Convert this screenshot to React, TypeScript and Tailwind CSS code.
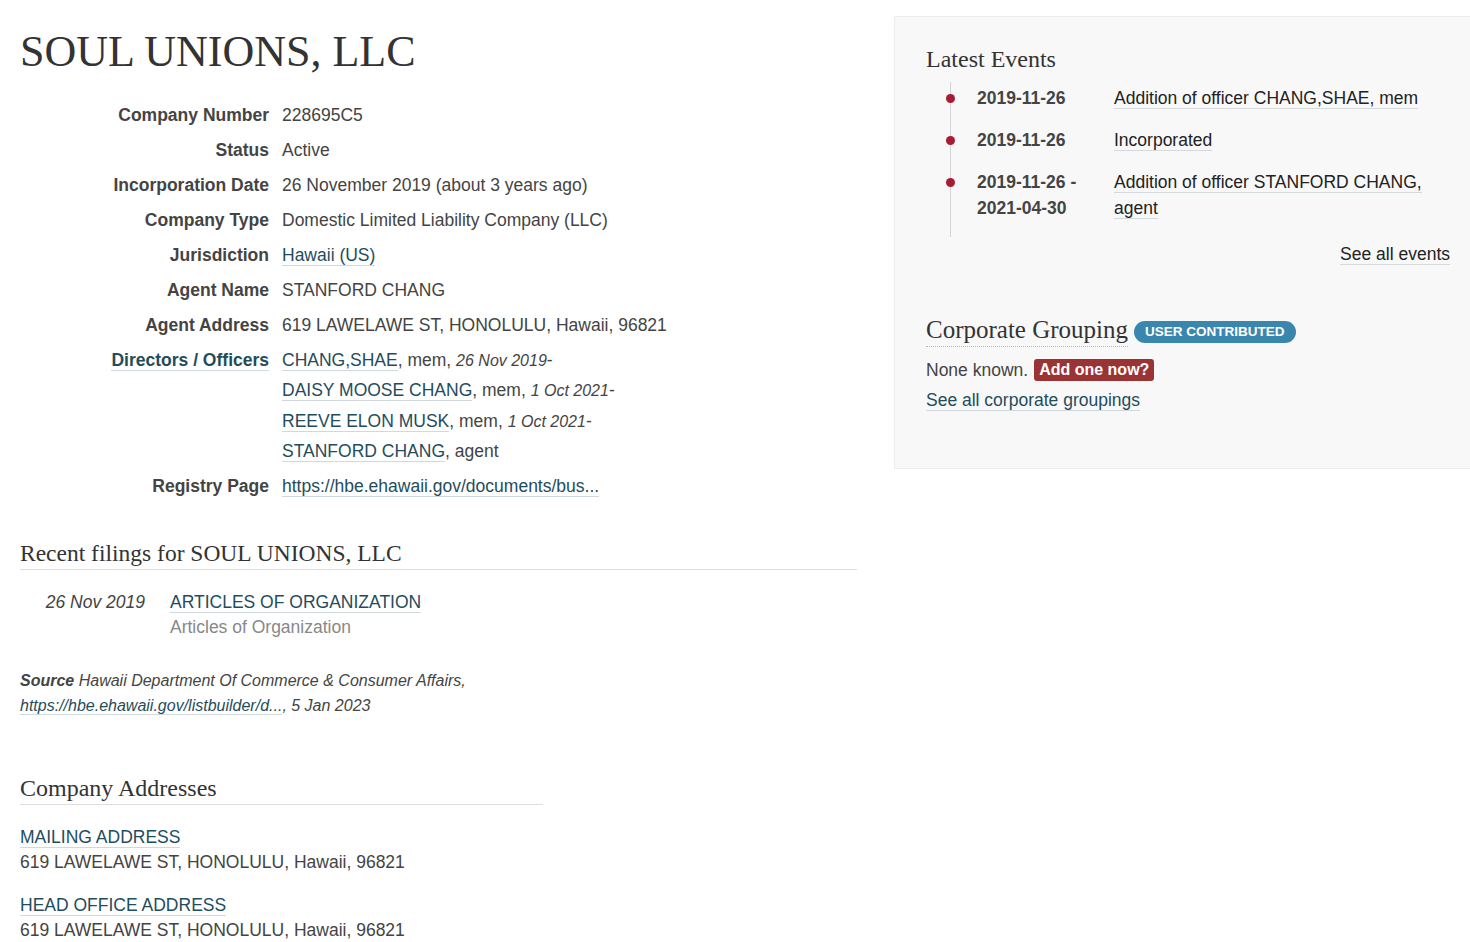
import React from 'react';

const sans = "font-['Liberation_Sans',Arial,sans-serif]";
const serif = "font-['Liberation_Serif','Times_New_Roman',serif]";
const link = 'text-[#1f4d5c] border-b border-[#cfd9de]';

const details: { label: string; value: React.ReactNode }[] = [
  { label: 'Company Number', value: '228695C5' },
  { label: 'Status', value: 'Active' },
  { label: 'Incorporation Date', value: '26 November 2019 (about 3 years ago)' },
  { label: 'Company Type', value: 'Domestic Limited Liability Company (LLC)' },
  { label: 'Jurisdiction', value: <a className={link}>Hawaii (US)</a> },
  { label: 'Agent Name', value: 'STANFORD CHANG' },
  { label: 'Agent Address', value: '619 LAWELAWE ST, HONOLULU, Hawaii, 96821' },
];

const officers = [
  { name: 'CHANG,SHAE', role: 'mem', since: '26 Nov 2019' },
  { name: 'DAISY MOOSE CHANG', role: 'mem', since: '1 Oct 2021' },
  { name: 'REEVE ELON MUSK', role: 'mem', since: '1 Oct 2021' },
  { name: 'STANFORD CHANG', role: 'agent', since: '' },
];

const events = [
  { date: ['2019-11-26'], text: ['Addition of officer CHANG,SHAE, mem'] },
  { date: ['2019-11-26'], text: ['Incorporated'] },
  { date: ['2019-11-26 -', '2021-04-30'], text: ['Addition of officer STANFORD CHANG,', 'agent'] },
];

const addresses = ['MAILING ADDRESS', 'HEAD OFFICE ADDRESS'];

const App = () => {
  return (
    <div className={`${sans} min-h-[942px] bg-white text-[#444] flex gap-[37px] pl-5`}>
      {/* Main column */}
      <div className="w-[837px] shrink-0">
        <h1 className={`${serif} text-[44px] leading-[48px] text-[#333] mt-[28px]`}>SOUL UNIONS, LLC</h1>

        <dl className="grid grid-cols-[249px_1fr] gap-x-[13px] mt-[24px] text-[17.5px] leading-[30px]">
          {details.map((d) => (
            <React.Fragment key={d.label}>
              <dt className="text-right font-bold mb-[5px]">{d.label}</dt>
              <dd className="mb-[5px]">{d.value}</dd>
            </React.Fragment>
          ))}
          <dt className="text-right font-bold mb-[5px]">
            <a className={link}>Directors / Officers</a>
          </dt>
          <dd className="mb-[5px]">
            {officers.map((o) => (
              <div key={o.name} className="h-[30.25px]">
                <a className={link}>{o.name}</a>, {o.role}
                {o.since && (
                  <>
                    , <i className="text-[16px] leading-none">{o.since}</i>-
                  </>
                )}
              </div>
            ))}
          </dd>
          <dt className="text-right font-bold">Registry Page</dt>
          <dd>
            <a className={link}>https://hbe.ehawaii.gov/documents/bus...</a>
          </dd>
        </dl>

        <h2 className={`${serif} text-[23.5px] leading-[32px] text-[#333] mt-[36px] border-b border-[#ddd]`}>
          Recent filings for SOUL UNIONS, LLC
        </h2>
        <div className="grid grid-cols-[125px_1fr] gap-x-[25px] mt-[20px] text-[17.5px] leading-[25px]">
          <i className="text-right">26 Nov 2019</i>
          <div>
            <a className={link}>ARTICLES OF ORGANIZATION</a>
            <div className="text-[#888]">Articles of Organization</div>
          </div>
        </div>

        <p className="mt-[28px] text-[16px] leading-[25px] italic">
          <b>Source</b> Hawaii Department Of Commerce &amp; Consumer Affairs,
          <br />
          <a className={link}>https://hbe.ehawaii.gov/listbuilder/d...</a>, 5 Jan 2023
        </p>

        <div className="w-[523px] mt-[54px]">
          <h2 className={`${serif} text-[24px] leading-[32px] text-[#333] border-b border-[#ddd]`}>Company Addresses</h2>
          <div className="mt-[20px] flex flex-col gap-[18px] text-[17.5px] leading-[25px]">
            {addresses.map((a) => (
              <div key={a}>
                <a className={link}>{a}</a>
                <div>619 LAWELAWE ST, HONOLULU, Hawaii, 96821</div>
              </div>
            ))}
          </div>
        </div>
      </div>

      {/* Sidebar */}
      <aside className="mt-4 w-[576px] h-[453px] shrink-0 bg-[#f8f8f8] border border-r-0 border-[#ececec] pl-[31px] pr-5 pt-[26px]">
        <h3 className={`${serif} text-[24px] leading-[32px] text-[#333]`}>Latest Events</h3>
        <ul className="ml-6 mt-[7px] pt-[3px] border-l border-[#d4d4d4] text-[17.5px] leading-[26px]">
          {events.map((e, i) => (
            <li key={i} className="relative grid grid-cols-[137px_1fr] pl-[26px] pb-4">
              <span className="absolute -left-[5px] top-[9px] w-[9px] h-[9px] rounded-full bg-[#a51d35]" />
              <div className="font-bold">
                {e.date.map((d) => (
                  <div key={d}>{d}</div>
                ))}
              </div>
              <div className="text-[#222]">
                {e.text.map((t) => (
                  <div key={t}>
                    <a className="border-b border-[#d4d9dc]">{t}</a>
                  </div>
                ))}
              </div>
            </li>
          ))}
        </ul>
        <div className="text-right mt-[4px] text-[17.5px] leading-[26px] text-[#222]">
          <a className="border-b border-[#d4d9dc]">See all events</a>
        </div>

        <div className="mt-[47px] flex items-center gap-[6px]">
          <h3 className={`${serif} text-[25px] leading-[32px] text-[#333] border-b border-dotted border-[#bbb]`}>
            Corporate Grouping
          </h3>
          <span className="bg-[#3a87ad] text-white text-[13.5px] font-bold leading-[22px] px-[11px] rounded-full mt-[3px]">
            USER CONTRIBUTED
          </span>
        </div>
        <div className="mt-[10px] text-[17.5px] leading-[26px] flex items-center gap-[6px]">
          <span>None known.</span>
          <a className="bg-[#9a3434] text-white text-[16px] font-bold px-[5px] rounded-[3px] leading-[22px]">Add one now?</a>
        </div>
        <div className="mt-[4px] text-[17.5px] leading-[26px]">
          <a className={link}>See all corporate groupings</a>
        </div>
      </aside>
    </div>
  );
};

export default App;
